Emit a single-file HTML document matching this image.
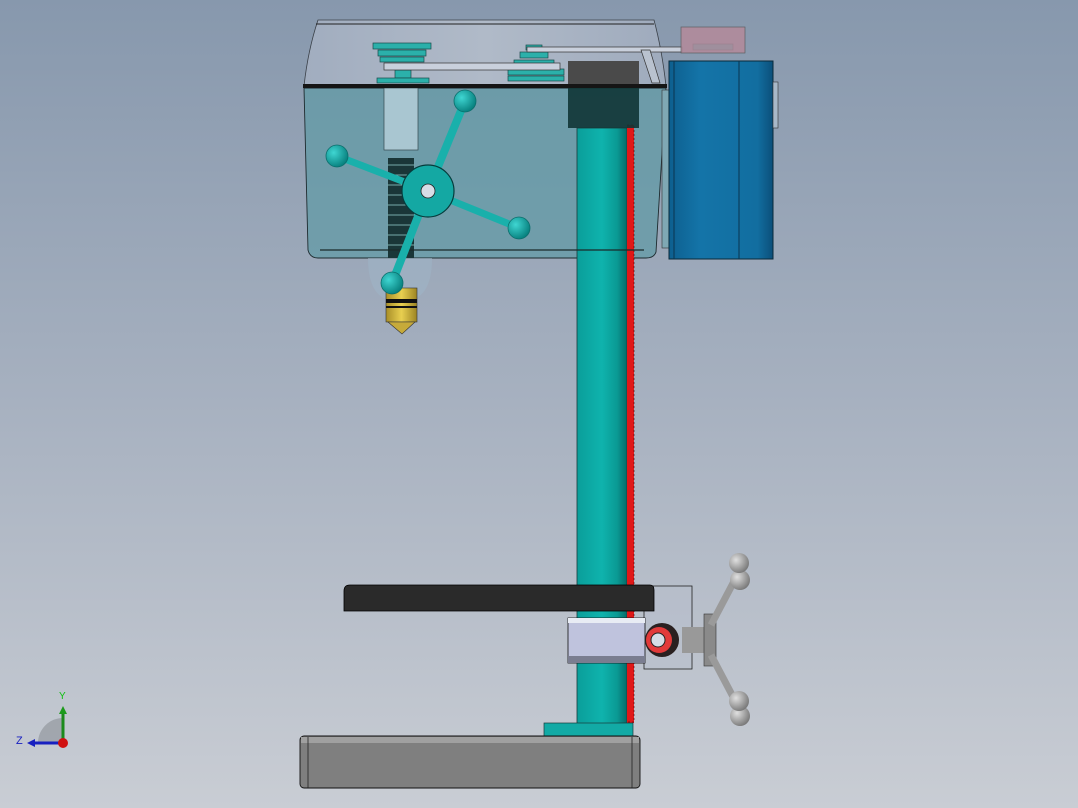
<!DOCTYPE html>
<html><head><meta charset="utf-8"><style>
html,body{margin:0;padding:0;width:1078px;height:808px;overflow:hidden}
svg{display:block}
</style></head><body>
<svg width="1078" height="808" viewBox="0 0 1078 808" xmlns="http://www.w3.org/2000/svg">
<defs>
<linearGradient id="bg" x1="0" y1="0" x2="0" y2="1">
<stop offset="0" stop-color="#8798ad"/><stop offset="0.5" stop-color="#a7b1c0"/><stop offset="1" stop-color="#c9cdd4"/></linearGradient>
<linearGradient id="col" x1="0" y1="0" x2="1" y2="0">
<stop offset="0" stop-color="#0a9e9a"/><stop offset="0.5" stop-color="#0fb3ad"/><stop offset="0.8" stop-color="#0a9a94"/><stop offset="1" stop-color="#066c6a"/></linearGradient>
<linearGradient id="motor" x1="0" y1="0" x2="1" y2="0">
<stop offset="0" stop-color="#0d5f8f"/><stop offset="0.3" stop-color="#1474a8"/><stop offset="0.85" stop-color="#126ea0"/><stop offset="1" stop-color="#0b4f7a"/></linearGradient>
<linearGradient id="hood" x1="0" y1="0" x2="1" y2="0">
<stop offset="0" stop-color="#a1adbf"/><stop offset="0.5" stop-color="#b0bac8"/><stop offset="1" stop-color="#9fabbd"/></linearGradient>
<radialGradient id="ball" cx="0.35" cy="0.35" r="0.7"><stop offset="0" stop-color="#3fd6d2"/><stop offset="1" stop-color="#067e7c"/></radialGradient>
<radialGradient id="gball" cx="0.35" cy="0.35" r="0.7"><stop offset="0" stop-color="#e0e0e0"/><stop offset="1" stop-color="#777"/></radialGradient>
<linearGradient id="yel" x1="0" y1="0" x2="1" y2="0"><stop offset="0" stop-color="#a88e28"/><stop offset="0.5" stop-color="#e8cf50"/><stop offset="1" stop-color="#9c8424"/></linearGradient>
</defs>
<rect width="1078" height="808" fill="url(#bg)"/>

<!-- hood top -->
<path d="M318 20 L654 20 Q662 50 666 86 L304 86 Q308 50 318 20 Z" fill="url(#hood)" stroke="#3a4048" stroke-width="0.8"/>
<line x1="316" y1="24" x2="654" y2="24" stroke="#222" stroke-width="1"/>
<!-- pulleys -->
<g fill="#2bb0aa" stroke="#1a4a4a" stroke-width="0.7">
<rect x="373" y="43" width="58" height="6"/><rect x="378" y="50" width="48" height="6"/><rect x="380" y="57" width="44" height="5"/>
<rect x="395" y="70" width="16" height="8"/><rect x="377" y="78" width="52" height="5"/>
<rect x="526" y="45" width="16" height="5"/><rect x="520" y="52" width="28" height="6"/><rect x="514" y="60" width="40" height="5"/><rect x="508" y="69" width="56" height="6"/><rect x="508" y="76" width="56" height="5"/>
<rect x="693" y="44" width="40" height="6"/>
</g>
<rect x="384" y="63" width="176" height="7" fill="#c9d0dc" stroke="#333" stroke-width="0.7"/>
<rect x="527" y="47" width="155" height="5" fill="#c9d0dc" stroke="#333" stroke-width="0.7"/>
<path d="M641 50 L650 50 L660 83 L652 83 Z" fill="#b9c2cf" stroke="#333" stroke-width="0.7"/>
<!-- pink pulley -->
<rect x="681" y="27" width="64" height="26" fill="#b48a9b" stroke="#555" stroke-width="0.7" opacity="0.85"/>
<!-- column dark top -->
<rect x="568" y="61" width="71" height="26" fill="#4a4a4a"/>
<!-- head translucent -->
<path d="M304 88 L666 88 L656 252 Q654 258 646 258 L318 258 Q310 258 308 250 Z" fill="#5f9aa5" fill-opacity="0.72" stroke="#1d2a2e" stroke-width="0.9"/>
<!-- column -->
<rect x="577" y="128" width="50" height="599" fill="url(#col)" stroke="#1a3a3a" stroke-width="0.8"/>
<rect x="627" y="125" width="7" height="598" fill="#e01818"/>
<path d="M627 125 L634 125 L634 722 L627 722" fill="none" stroke="#400" stroke-width="0.6" stroke-dasharray="2 2"/>
<rect x="568" y="88" width="71" height="40" fill="#0f3535" opacity="0.9"/>
<rect x="384" y="88" width="34" height="62" fill="#a9c6d1" stroke="#34494f" stroke-width="0.7"/>
<rect x="388" y="158" width="26" height="100" fill="#1a3638"/>
<g stroke="#7aa" stroke-width="1">
<line x1="387" y1="165" x2="415" y2="165"/><line x1="387" y1="175" x2="415" y2="175"/><line x1="387" y1="185" x2="415" y2="185"/><line x1="387" y1="195" x2="415" y2="195"/><line x1="387" y1="205" x2="415" y2="205"/><line x1="387" y1="215" x2="415" y2="215"/><line x1="387" y1="225" x2="415" y2="225"/><line x1="387" y1="235" x2="415" y2="235"/><line x1="387" y1="245" x2="415" y2="245"/>
</g>
<rect x="303" y="84" width="364" height="4" fill="#151515"/>
<line x1="320" y1="250" x2="644" y2="250" stroke="#1a2a2a" stroke-width="1.2"/>
<!-- side bracket -->
<rect x="662" y="90" width="8" height="158" fill="#7fa8b4" stroke="#333" stroke-width="0.6"/>
<!-- motor -->
<rect x="669" y="61" width="104" height="198" fill="url(#motor)" stroke="#0a2a3a" stroke-width="1"/>
<line x1="674" y1="61" x2="674" y2="259" stroke="#0a3550" stroke-width="1"/>
<line x1="739" y1="61" x2="739" y2="259" stroke="#0a3550" stroke-width="1"/>
<rect x="773" y="82" width="5" height="46" fill="#a8b8c8" stroke="#333" stroke-width="0.6"/>
<!-- dome + chuck -->
<path d="M368 258 L432 258 Q432 296 410 300 L390 300 Q368 296 368 258Z" fill="#9fb4c6" fill-opacity="0.6"/>
<rect x="386" y="288" width="31" height="34" fill="url(#yel)" stroke="#333" stroke-width="0.6"/>
<rect x="386" y="299" width="31" height="4" fill="#111"/>
<rect x="386" y="306" width="31" height="2" fill="#111"/>
<path d="M388 322 L415 322 L402 334 Z" fill="#c6aa3a" stroke="#333" stroke-width="0.6"/>
<!-- handwheel -->
<g stroke="#0b6e6c" stroke-width="0.8" fill="#19b0ab">
<path d="M428 191 L465 101" stroke="#19b0ab" stroke-width="8" fill="none"/>
<path d="M428 191 L337 156" stroke="#19b0ab" stroke-width="7" fill="none"/>
<path d="M428 191 L519 228" stroke="#19b0ab" stroke-width="7" fill="none"/>
<path d="M428 191 L392 283" stroke="#19b0ab" stroke-width="8" fill="none"/>
<circle cx="428" cy="191" r="26" fill="#14a8a3" stroke="#053c3c" stroke-width="1.2"/>
<circle cx="428" cy="191" r="7" fill="#d6dde6" stroke="#222"/>
<circle cx="465" cy="101" r="11" fill="url(#ball)"/>
<circle cx="337" cy="156" r="11" fill="url(#ball)"/>
<circle cx="519" cy="228" r="11" fill="url(#ball)"/>
<circle cx="392" cy="283" r="11" fill="url(#ball)"/>
</g>
<!-- gear housing -->
<rect x="644" y="586" width="48" height="83" fill="#b6bfcc" fill-opacity="0.4" stroke="#222" stroke-width="0.8"/>
<!-- table -->
<path d="M350 585 L650 585 Q654 585 654 590 L654 611 L344 611 L344 591 Q344 585 350 585Z" fill="#2a2a2a" stroke="#000" stroke-width="0.8"/>
<rect x="568" y="618" width="77" height="45" fill="#bfc3dd" stroke="#111" stroke-width="0.8"/>
<rect x="568" y="618" width="77" height="5" fill="#e8ecf4"/>
<rect x="568" y="656" width="77" height="7" fill="#7a7d90"/>
<circle cx="662" cy="640" r="17" fill="#2a2020"/>
<circle cx="659" cy="640" r="13" fill="#e23a3a"/>
<circle cx="658" cy="640" r="7" fill="#d6dde6" stroke="#222"/>
<rect x="682" y="627" width="24" height="26" fill="#999"/>
<rect x="704" y="614" width="12" height="52" fill="#8a8a8a" stroke="#333" stroke-width="0.6"/>
<!-- crank -->
<path d="M711 625 L740 570" stroke="#9a9a9a" stroke-width="7"/>
<path d="M711 655 L740 710" stroke="#9a9a9a" stroke-width="7"/>
<circle cx="740" cy="580" r="10" fill="url(#gball)"/>
<circle cx="739" cy="563" r="10" fill="url(#gball)"/>
<circle cx="740" cy="716" r="10" fill="url(#gball)"/>
<circle cx="739" cy="701" r="10" fill="url(#gball)"/>
<!-- foot -->
<rect x="544" y="723" width="89" height="14" fill="#12aaa5" stroke="#1a3a3a" stroke-width="0.7"/>
<!-- base -->
<rect x="300" y="736" width="340" height="52" rx="4" fill="#7f7f7f" stroke="#111" stroke-width="0.9"/>
<rect x="301" y="737" width="338" height="6" fill="#a0a0a0"/>
<line x1="308" y1="737" x2="308" y2="788" stroke="#222" stroke-width="0.8"/>
<line x1="632" y1="737" x2="632" y2="788" stroke="#222" stroke-width="0.8"/>
<!-- triad -->
<path d="M63 743 L38 743 A25 25 0 0 1 63 718 Z" fill="#8a8f96" opacity="0.6"/>
<line x1="63" y1="743" x2="63" y2="713" stroke="#1c8a1c" stroke-width="3"/>
<path d="M59 714 L63 706 L67 714Z" fill="#1c9a1c"/>
<line x1="63" y1="743" x2="34" y2="743" stroke="#1820c0" stroke-width="3"/>
<path d="M35 739 L27 743 L35 747Z" fill="#1820c0"/>
<circle cx="63" cy="743" r="5" fill="#d01010"/>
<text x="59" y="699" font-family="Liberation Sans, sans-serif" font-size="10" fill="#10c010">Y</text>
<text x="16" y="744" font-family="Liberation Sans, sans-serif" font-size="11" fill="#1820c0">Z</text>
</svg>
</body></html>
